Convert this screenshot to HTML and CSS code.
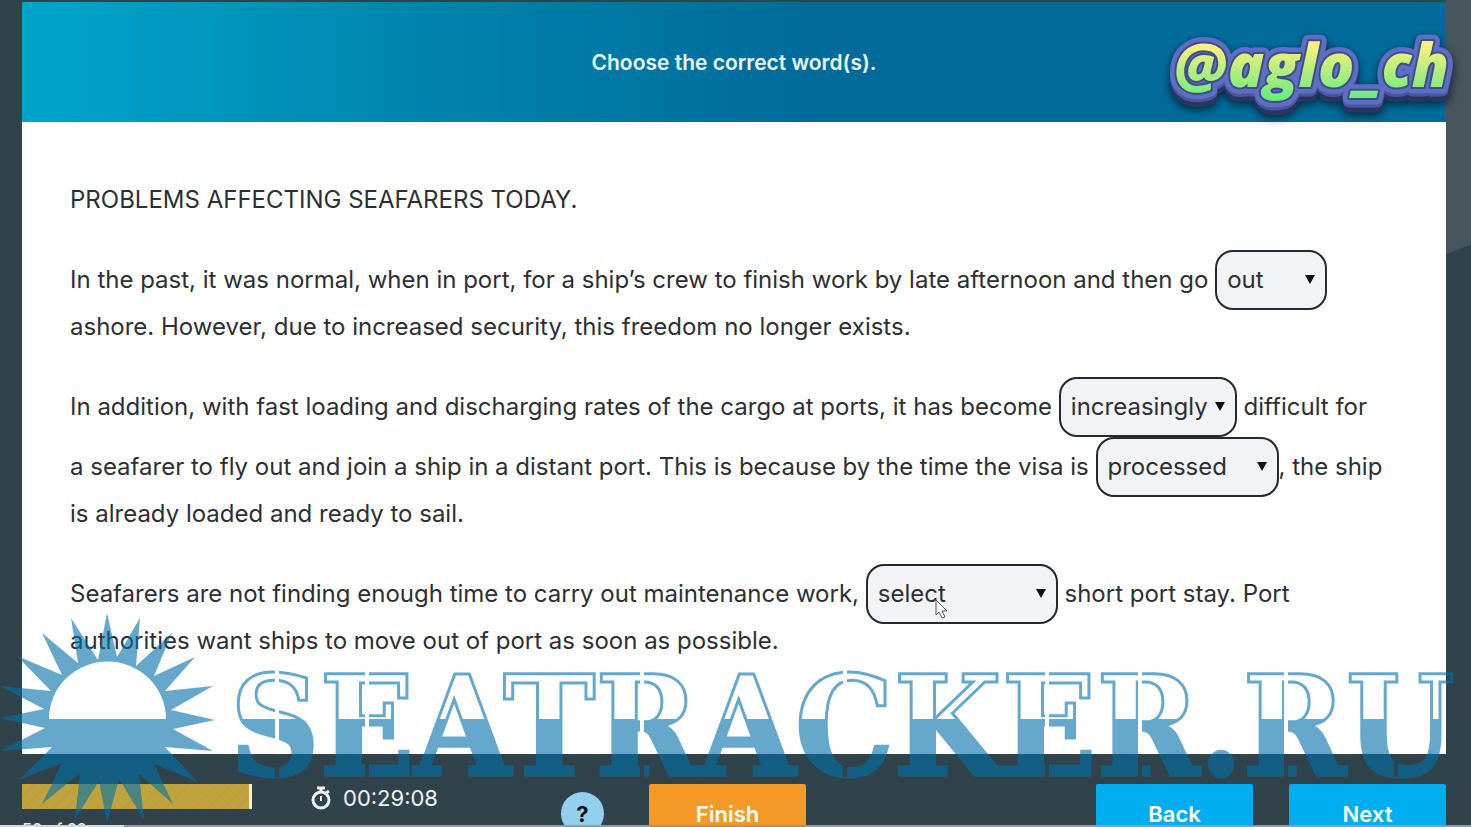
FILE: index.html
```html
<!DOCTYPE html>
<html lang="en">
<head>
    <meta charset="UTF-8">
    <meta name="viewport" content="width=device-width, initial-scale=1.0">
    <title>Choose the correct word(s).</title>
    <link rel="stylesheet" href="styles.css">
</head>
<body>
    <div class="test-page">
        <header class="task-header">
            <h1>Choose the correct word(s).</h1>
        </header>

        <main class="task-content">
            <p>PROBLEMS AFFECTING SEAFARERS TODAY.</p>
            <p>
                In the past, it was normal, when in port, for a ship’s crew to finish work by late afternoon and then go
                <span class="gap gap-out"><select aria-label="Gap 1"><option>out</option></select></span>
                ashore. However, due to increased security, this freedom no longer exists.
            </p>
            <p>
                In addition, with fast loading and discharging rates of the cargo at ports, it has become
                <span class="gap gap-increasingly"><select aria-label="Gap 2"><option>increasingly</option></select></span>
                difficult for a&nbsp;seafarer to fly out and join a ship in a distant port. This is because by the time the visa is
                <span class="gap gap-processed"><select aria-label="Gap 3"><option>processed</option></select></span>, the ship is&nbsp;already loaded and ready to sail.
            </p>
            <p>
                Seafarers are not finding enough time to carry out maintenance work,
                <span class="gap gap-select"><select aria-label="Gap 4"><option>select</option></select></span>
                short port stay. Port authorities want ships to move out of port as soon as possible.
            </p>
        </main>

        <footer class="task-footer">
            <div class="progress">
                <div class="progress-bar"></div>
                <span class="progress-text">50 of 60</span>
            </div>
            <div class="timer">
                <svg width="20" height="24" viewBox="0 0 20 24" fill="none" stroke="currentColor" stroke-width="3">
                    <circle cx="10" cy="14" r="8"/>
                    <path d="M6 2h8M10 2v4M15 7l3-2"/>
                    <path d="M10 10v5" stroke-width="2"/>
                </svg>
                <span>00:29:08</span>
            </div>
            <button class="help-button" type="button">?</button>
            <button class="finish-button" type="button">Finish</button>
            <div class="nav-buttons">
                <button class="nav-button" type="button">Back</button>
                <button class="nav-button" type="button">Next</button>
            </div>
        </footer>
    </div>

    <svg class="channel-tag" width="310" height="110" viewBox="0 0 310 110">
        <defs>
            <linearGradient id="tag-fill" gradientUnits="userSpaceOnUse" x1="0" y1="20" x2="0" y2="76">
                <stop offset="0" stop-color="#fbf07c"/>
                <stop offset="1" stop-color="#62ec7c"/>
            </linearGradient>
            <text id="tag-name" x="18" y="62">@aglo_ch</text>
        </defs>
        <use class="tag-edge" href="#tag-name"/>
        <use class="tag-line" href="#tag-name"/>
        <use href="#tag-name" fill="url(#tag-fill)"/>
    </svg>

    <svg class="watermark" viewBox="0 0 1471 220">
        <defs>
            <linearGradient id="half-fill" gradientUnits="userSpaceOnUse" x1="0" y1="0" x2="0" y2="220">
                <stop offset="0.51" stop-color="#0070aa" stop-opacity="0"/>
                <stop offset="0.51" stop-color="#0070aa"/>
            </linearGradient>
            <!-- stencil cuts in the lettering -->
            <mask id="stencil" maskUnits="userSpaceOnUse" x="0" y="0" width="1471" height="220">
                <rect width="1471" height="220" fill="#fff"/>
                <path d="M277 50v120M367 50v120M642 50v120M845 50v120M1047 50v120M1140 50v120M1286 50v120M1396 140v30" stroke="#000" stroke-width="4"/>
            </mask>
        </defs>
        <g class="watermark-ink">
            <path d="M107 6L117 50 140 11 136 59 172 26 154 69 195 50 165 84 213 79 171 103 215 113 173 122 213 144 165 140 198 175 154 157 173 197 139 167 144 213 119 172 107 216 99 174 75 212 80 166 42 197 62 156 19 173 52 140 0 144 45 121 0 111 44 102 0 79 51 84 17 49 62 68 42 26 78 56 71 11 98 53z"/>
            <text x="230" y="168" mask="url(#stencil)">SEATRACKER.RU</text>
        </g>
        <path class="sun-top" d="M49 112H166A58 57 0 0 0 49 112z"/>
    </svg>

    <svg class="cursor" width="14" height="20" viewBox="0 0 14 20">
        <path d="M2 1v15l3-3 3 6 3-1-3-6h5z" fill="#fff" stroke="#555"/>
    </svg>

    <div class="player-track"><div class="player-position"></div></div>
</body>
</html>
```
FILE: styles.css
```css
:root {
    --page-dark: #30434a;
    --ink: #2c2f33;
    --sky: #00aeef;
    --orange: #f59a29;
}

* {
    margin: 0;
    padding: 0;
    box-sizing: border-box;
}

body {
    position: relative;
    height: 100vh;
    overflow: hidden;
    font-family: 'Inter', Arial, sans-serif;
    background: linear-gradient(160deg, #47555c 238px, var(--page-dark) 239px) right top / 25px 100% no-repeat, var(--page-dark);
}

button,
select {
    font: inherit;
    border: none;
}

.test-page {
    display: flex;
    flex-direction: column;
    height: 100%;
    padding: 2px 25px 0 22px;
}

.task-header {
    display: flex;
    justify-content: center;
    align-items: center;
    height: 120px;
    background: linear-gradient(90deg, #00a5cb, #0082ad 30%, #006b9a 55%, #006b9a);
}

.task-header h1 {
    color: #e9f7fc;
    font-size: 21px;
    font-weight: 600;
}

.task-content {
    flex: 1;
    padding: 61px 48px 0;
    background-color: white;
    color: var(--ink);
    font-size: 24px;
    line-height: 34px;
}

.task-content p {
    margin-bottom: 33px;
}

.gap {
    display: inline-flex;
    position: relative;
}

.gap::after {
    content: '';
    position: absolute;
    right: 12px;
    top: 25px;
    border: 5px solid transparent;
    border-top: 9px solid #111;
    border-bottom: none;
}

.gap select {
    appearance: none;
    width: 100%;
    height: 60px;
    padding: 0 10px;
    border: 2px solid #26282b;
    border-radius: 18px;
    background-color: #f1f3f6;
    color: var(--ink);
}

.gap-out {
    width: 112px;
}

.gap-increasingly {
    width: 178px;
}

.gap-processed {
    width: 183px;
}

.gap-select {
    width: 192px;
}

.task-footer {
    display: flex;
    align-items: flex-start;
    height: 73px;
    padding-top: 30px;
    color: #eef2f4;
}

.progress {
    width: 230px;
}

.progress-bar {
    height: 25px;
    border-right: 3px solid #f5efd8;
    background: repeating-linear-gradient(135deg, #c1a33e 0 8px, #baa040 8px 10px);
}

.progress-text {
    display: block;
    padding-top: 8px;
    font-size: 16px;
    font-weight: 500;
    line-height: 24px;
}

.timer {
    display: flex;
    align-items: center;
    gap: 12px;
    margin-left: 59px;
    font-size: 22px;
    line-height: 28px;
}

.help-button {
    width: 43px;
    height: 43px;
    margin: 8px 45px 0 auto;
    border-radius: 50%;
    background-color: #93cfee;
    color: #111;
    font-size: 22px;
    font-weight: 700;
}

.finish-button,
.nav-button {
    width: 157px;
    height: 60px;
    border-radius: 2px;
    color: #fff;
    font-size: 22px;
    font-weight: 600;
}

.finish-button {
    background-color: var(--orange);
}

.nav-buttons {
    display: flex;
    gap: 36px;
    margin-left: 290px;
}

.nav-button {
    background-color: var(--sky);
}

.channel-tag {
    position: absolute;
    top: 25px;
    right: 5px;
    font-family: 'Open Sans', sans-serif;
    font-size: 60px;
    font-weight: 800;
    font-style: italic;
    stroke-linejoin: round;
    filter: drop-shadow(0 3px 0 #4a579f) drop-shadow(0 5px 0 #2b3562) drop-shadow(0 3px 4px rgba(0, 0, 0, .6));
}

.tag-edge {
    fill: #5e6ec4;
    stroke: #5e6ec4;
    stroke-width: 13px;
}

.tag-line {
    fill: #3f4c8a;
    stroke: #3f4c8a;
    stroke-width: 4px;
}

.watermark {
    position: absolute;
    left: 0;
    bottom: 0;
    width: 100%;
    pointer-events: none;
}

.watermark-ink {
    fill: #0070aa;
    opacity: .6;
}

.watermark-ink text {
    font-family: 'DejaVu Serif Condensed', 'DejaVu Serif', serif;
    font-size: 138px;
    font-weight: 700;
    fill: url(#half-fill);
    stroke: #0070aa;
    stroke-width: 3px;
}

.sun-top {
    fill: white;
}

.cursor {
    position: absolute;
    left: 934px;
    top: 599px;
}

.player-track {
    position: absolute;
    left: 0;
    right: 0;
    bottom: 0;
    height: 2px;
    background-color: #92989c;
}

.player-position {
    width: 124px;
    height: 2px;
    background-color: #d5d8da;
}
```
